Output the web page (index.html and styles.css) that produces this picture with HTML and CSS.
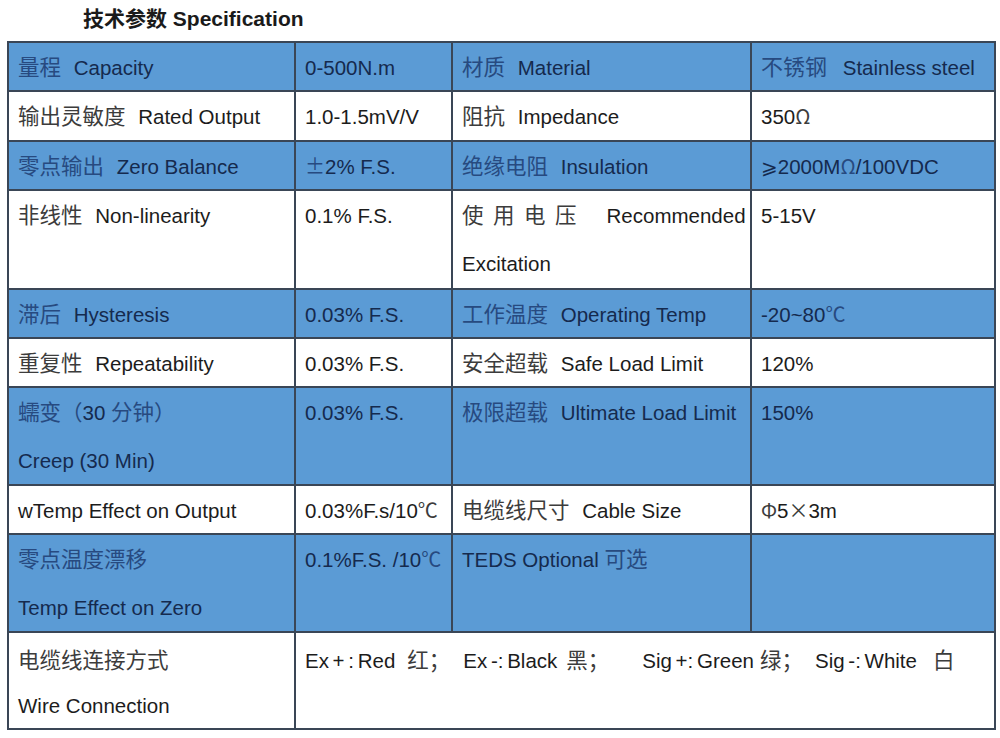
FILE: index.html
```html
<!DOCTYPE html>
<html lang="zh">
<head>
<meta charset="utf-8">
<title>技术参数 Specification</title>
<link rel="stylesheet" href="styles.css">
</head>
<body>
<h1 class="title"><span class="zh">技术参数</span> Specification</h1>
<table class="spec">
  <colgroup>
    <col class="c1"><col class="c2"><col class="c3"><col class="c4">
  </colgroup>
  <tr class="blue">
    <td><span class="zh lead">量程</span> Capacity</td>
    <td>0-500N.m</td>
    <td><span class="zh lead">材质</span> Material</td>
    <td><span class="zh lead wide">不锈钢</span> Stainless steel</td>
  </tr>
  <tr class="white r2">
    <td><span class="zh lead">输出灵敏度</span> Rated Output</td>
    <td>1.0-1.5mV/V</td>
    <td><span class="zh lead">阻抗</span> Impedance</td>
    <td>350<span class="zh sym">Ω</span></td>
  </tr>
  <tr class="blue">
    <td><span class="zh lead">零点输出</span> Zero Balance</td>
    <td><span class="zh sym">±</span>2% F.S.</td>
    <td><span class="zh lead">绝缘电阻</span> Insulation</td>
    <td><span class="geq">⩾</span>2000M<span class="zh sym">Ω</span>/100VDC</td>
  </tr>
  <tr class="white tall t1">
    <td><span class="zh lead">非线性</span> Non-linearity</td>
    <td>0.1% F.S.</td>
    <td><div><span class="zh spaced">使用电</span><span class="zh">压</span><span class="rec">Recommended</span></div><div class="l2">Excitation</div></td>
    <td>5-15V</td>
  </tr>
  <tr class="blue">
    <td><span class="zh lead">滞后</span> Hysteresis</td>
    <td>0.03% F.S.</td>
    <td><span class="zh lead">工作温度</span> Operating Temp</td>
    <td>-20~80<span class="zh sym">℃</span></td>
  </tr>
  <tr class="white">
    <td><span class="zh lead">重复性</span> Repeatability</td>
    <td>0.03% F.S.</td>
    <td><span class="zh lead">安全超载</span> Safe Load Limit</td>
    <td>120%</td>
  </tr>
  <tr class="blue tall">
    <td><div><span class="zh">蠕变（</span>30 <span class="zh">分钟）</span></div><div class="l2">Creep (30 Min)</div></td>
    <td>0.03% F.S.</td>
    <td><span class="zh lead">极限超载</span> Ultimate Load Limit</td>
    <td>150%</td>
  </tr>
  <tr class="white">
    <td>wTemp Effect on Output</td>
    <td>0.03%F.s/10<span class="zh sym">℃</span></td>
    <td><span class="zh lead">电缆线尺寸</span> Cable Size</td>
    <td><span class="zh sym">Φ</span>5<span class="zh sym">×</span>3m</td>
  </tr>
  <tr class="blue tall">
    <td><div><span class="zh">零点温度漂移</span></div><div class="l2">Temp Effect on Zero</div></td>
    <td>0.1%F.S. /10<span class="zh sym">℃</span></td>
    <td>TEDS Optional <span class="zh">可选</span></td>
    <td></td>
  </tr>
  <tr class="white tall last">
    <td><div><span class="zh">电缆线连接方式</span></div><div class="l2">Wire Connection</div></td>
    <td colspan="3" class="wires"><span class="w1">Ex + : Red</span><span class="zh w2">红；</span><span class="w3">Ex -: Black</span><span class="zh w4">黑；</span><span class="w5">Sig +: Green</span><span class="zh w6">绿；</span><span class="w7">Sig -: White</span><span class="zh w8">白</span></td>
  </tr>
</table>
</body>
</html>
```
FILE: styles.css
```css
html, body {
  margin: 0;
  padding: 0;
  background: #ffffff;
}
body {
  font-family: "Liberation Sans", "Noto Sans CJK SC", sans-serif;
  width: 1000px;
  height: 738px;
  overflow: hidden;
}
.title {
  margin: 0;
  height: 41px;
  padding-left: 83px;
  font-size: 21px;
  font-weight: bold;
  line-height: 38px;
  color: #1a1a1a;
}
.title .zh {
  font-size: 21px;
  font-weight: bold;
}
.zh {
  font-family: "Noto Sans CJK SC", sans-serif;
  font-size: 21.5px;
  line-height: 20px;
}
.lead {
  margin-right: 7px;
}
.wide {
  font-size: 22px;
  margin-right: 10px;
}
.sym {
  font-size: 20px;
}
.geq {
  font-family: "DejaVu Sans", "Noto Sans CJK SC", sans-serif;
  font-size: 20px;
  line-height: 20px;
}
.spec {
  margin-left: 7px;
  width: 987px;
  border-collapse: collapse;
  table-layout: fixed;
  font-size: 20.5px;
  border: 2px solid #5f6b7c;
}
.c1 { width: 287px; }
.c2 { width: 157px; }
.c3 { width: 299px; }
.c4 { width: 244px; }
.spec tr {
  height: 49px;
}
.spec tr.r2 {
  height: 50px;
}
.spec tr.tall {
  height: 98px;
}
.spec tr.t1 {
  height: 99px;
}
.spec tr.last {
  height: 97px;
}
.spec td {
  border: 2px solid #3a4656;
  padding: 3px 0 0 9px;
  vertical-align: top;
  line-height: 44px;
  white-space: nowrap;
  overflow: hidden;
}
.l2 {
  margin-top: 4px;
}
.last .l2 {
  margin-top: 1px;
}
.last td {
  padding-top: 6px;
}
.blue td {
  background: #5b9bd5;
  color: #152a4e;
}
.blue .zh {
  color: #274a80;
}
.white td {
  background: #ffffff;
  color: #1c1c1c;
}
.white .zh {
  color: #3c3c3c;
}
.spaced {
  letter-spacing: 9.5px;
}
.rec {
  margin-left: 30px;
}
.wires {
  word-spacing: -2px;
}
.wires span { display: inline-block; }
.w2 { margin-left: 12px; }
.w3 { margin-left: 13px; }
.w4 { margin-left: 9px; }
.w5 { margin-left: 33px; }
.w6 { margin-left: 6px; }
.w7 { margin-left: 12px; }
.w8 { margin-left: 16px; }
```
